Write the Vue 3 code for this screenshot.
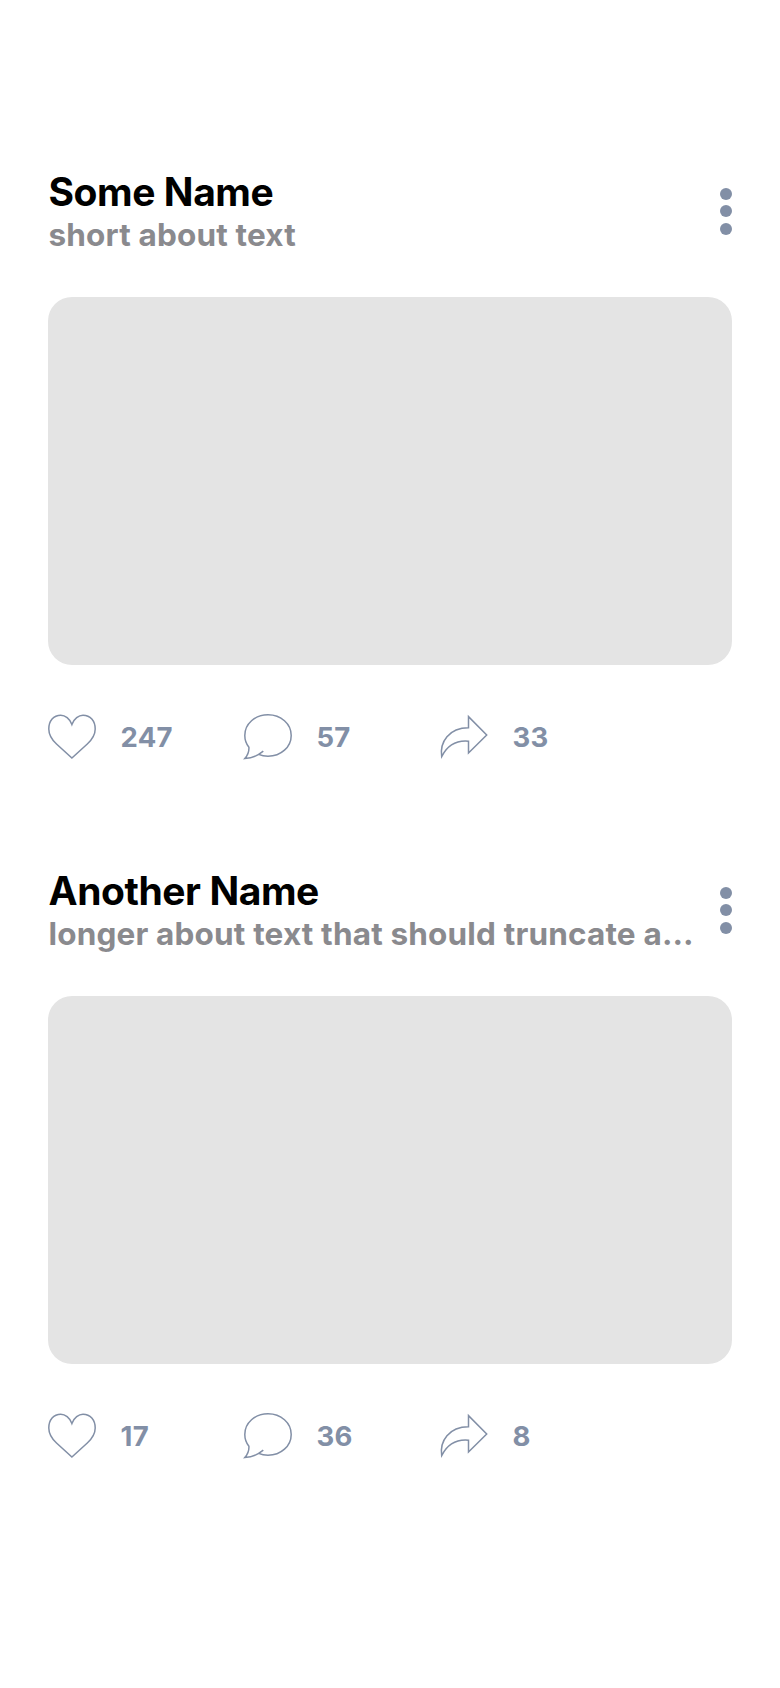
<script setup>
const posts = [
  { name: 'Some Name', about: 'short about text', likes: 247, comments: 57, shares: 33 },
  {
    name: 'Another Name',
    about: 'longer about text that should truncate at the end of the line',
    likes: 17,
    comments: 36,
    shares: 8,
  },
]

const icons = {
  likes:
    'M23.9 10.5C21.8 4.5 17 1.2 12.8 1.2C5.5 1.2 .8 7 .8 15C.8 22 4.5 26.3 8.5 30L23.9 44L39.3 30C43.3 26.3 47.2 22 47.2 15C47.2 7 42.3 1.2 35 1.2C30.8 1.2 26 4.5 23.9 10.5Z',
  comments:
    'M14.5 40.4C17.5 41.6 20.5 42.2 24 42.2C37 42.2 47.2 33 47.2 21.4C47.2 9.8 37 .8 24 .8C11 .8 .8 9.8 .8 21.4C.8 26 2.4 30 4.9 33.2C5.2 37.5 3.6 41.5 .8 44.6C8 44.2 14.5 41.2 19.3 37.2',
  shares:
    'M28.5 2.6L46.7 21L28.5 39V27.2C15 26 6.5 33 1.7 42.6C-.5 28 9 13.7 28.5 13.7Z',
}
</script>

<template>
  <main class="feed">
    <article v-for="post in posts" :key="post.name" class="post">
      <header class="head">
        <div class="who">
          <h2 class="name">{{ post.name }}</h2>
          <p class="about">{{ post.about }}</p>
        </div>
        <div class="more"><i /><i /><i /></div>
      </header>
      <div class="media" />
      <footer class="actions">
        <div v-for="(path, key) in icons" :key="key" class="action">
          <svg class="icon" viewBox="0 0 48 46"><path :d="path" /></svg>
          <span class="count">{{ post[key] }}</span>
        </div>
      </footer>
    </article>
  </main>
</template>

<style>
body {
  background: #fff;
}
</style>

<style scoped>
.feed {
  box-sizing: border-box;
  height: 1688px;
  padding: 169px 48px 0;
  font-family: Inter, "Liberation Sans", sans-serif;
  font-weight: 700;
}
.post {
  height: 699px;
}
.head {
  display: flex;
  height: 84px;
}
.who {
  width: 647px;
  padding-left: 0.5px;
}
.name {
  margin: 0;
  font-size: 39px;
  line-height: 46px;
  font-weight: 700;
  letter-spacing: -0.43px;
  color: #000;
}
.about {
  margin: 0;
  font-size: 31.5px;
  line-height: 40px;
  letter-spacing: 0.17px;
  color: #8a8a8e;
  white-space: nowrap;
  overflow: hidden;
  text-overflow: ellipsis;
}
.more {
  display: flex;
  flex-direction: column;
  gap: 5.7px;
  margin-left: auto;
  padding-top: 18.5px;
}
.more i {
  width: 12px;
  height: 12px;
  border-radius: 50%;
  background: #828fa6;
}
.media {
  height: 368px;
  margin-top: 44px;
  border-radius: 24px;
  background: #e4e4e4;
}
.actions {
  display: grid;
  grid-template-columns: repeat(3, 196px);
  margin-top: 49px;
}
.action {
  display: flex;
  align-items: center;
  gap: 24px;
  height: 46px;
}
.icon {
  width: 48px;
  height: 46px;
  overflow: visible;
  fill: none;
  stroke: #828fa6;
  stroke-width: 1.5;
}
.count {
  padding-left: 0.6px;
  font-size: 27.5px;
  line-height: 47px;
  letter-spacing: 0.2px;
  color: #828fa6;
}
</style>
